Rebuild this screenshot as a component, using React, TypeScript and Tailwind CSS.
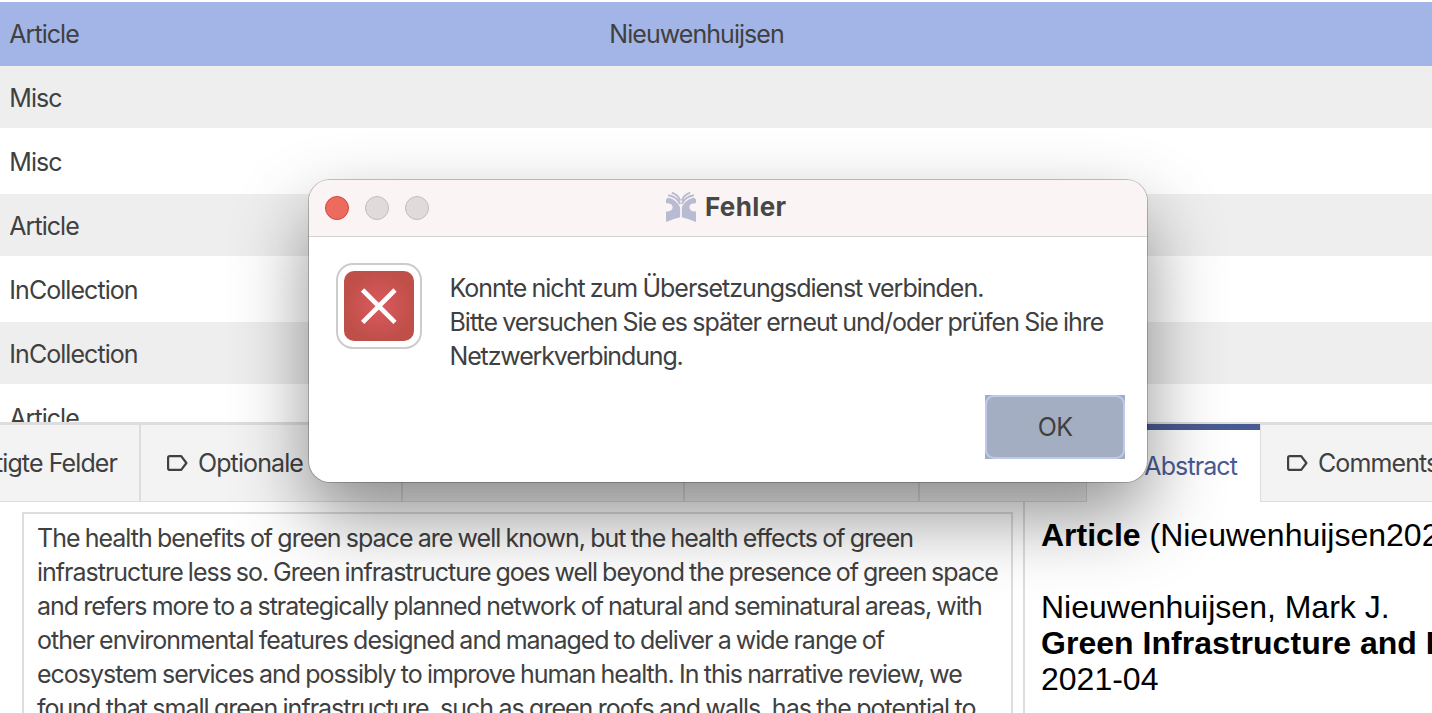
import React from "react";

const entries = [
  { type: "Article", author: "Nieuwenhuijsen", row: "h-16 bg-[#a3b5e6]", leading: "leading-[64px]" },
  { type: "Misc", author: "", row: "h-[62px] bg-[#eeeeee]", leading: "leading-[64px]" },
  { type: "Misc", author: "", row: "h-[66px] bg-white", leading: "leading-[68px]" },
  { type: "Article", author: "", row: "h-[62px] bg-[#eeeeee]", leading: "leading-[64px]" },
  { type: "InCollection", author: "", row: "h-[66px] bg-white", leading: "leading-[68px]" },
  { type: "InCollection", author: "", row: "h-[62px] bg-[#eeeeee]", leading: "leading-[64px]" },
  { type: "Article", author: "", row: "h-[66px] bg-white", leading: "leading-[68px]" },
];

const abstractLines = [
  { text: "The health benefits of green space are well known, but the health effects of green", spacing: "[word-spacing:-0.8px]" },
  { text: "infrastructure less so. Green infrastructure goes well beyond the presence of green space", spacing: "[word-spacing:-1.1px]" },
  { text: "and refers more to a strategically planned network of natural and seminatural areas, with", spacing: "[word-spacing:-0.9px]" },
  { text: "other environmental features designed and managed to deliver a wide range of", spacing: "[word-spacing:-0.85px]" },
  { text: "ecosystem services and possibly to improve human health. In this narrative review, we", spacing: "[word-spacing:-0.8px]" },
  { text: "found that small green infrastructure, such as green roofs and walls, has the potential to", spacing: "[word-spacing:-0.65px]" },
];

const messageLines = [
  { text: "Konnte nicht zum Übersetzungsdienst verbinden.", spacing: "tracking-[-1px] [word-spacing:-0.85px]" },
  { text: "Bitte versuchen Sie es später erneut und/oder prüfen Sie ihre", spacing: "tracking-[-1px] [word-spacing:-0.8px]" },
  { text: "Netzwerkverbindung.", spacing: "tracking-[-1.15px]" },
];

function LabelIcon() {
  return (
    <svg width="21" height="16" viewBox="0 0 21 16" fill="none" className="shrink-0">
      <path d="M2.8 1.1H14.2L19.4 8L14.2 14.9H2.8Q1.1 14.9 1.1 13.2V2.8Q1.1 1.1 2.8 1.1Z" stroke="#404040" strokeWidth="2.2" strokeLinejoin="round" />
    </svg>
  );
}

function BookLogo() {
  const half = (
    <g>
      <path d="M0 8.4L1.8 6.8C7 7.4 11.5 10.8 14.1 16.4V26.2C9.5 27.4 4.5 29 0 31V20.6C4.2 20.6 6.6 18.8 6.6 16.2C6.6 13.4 4.2 12 0 12.2Z" fill="#b9bbd2" />
      <path d="M2.2 4.3C7.4 5 12 8.4 14.2 13M5.8 1.6C9.8 3 13 6 14.2 9.6" stroke="#b9bbd2" strokeWidth="1.9" fill="none" />
    </g>
  );
  return (
    <svg width="30" height="32" viewBox="0 0 30 32" className="shrink-0">
      {half}
      <g transform="translate(30 0) scale(-1 1)">{half}</g>
    </svg>
  );
}

function EntryTable() {
  return (
    <div className="h-[422px] shrink-0 overflow-hidden pt-0.5 tracking-[-0.95px]">
      {entries.map((e, i) => (
        <div key={i} className={`grid grid-cols-[600px_1fr] items-start pl-[9.3px] ${e.row} ${e.leading}`}>
          <span>{e.type}</span>
          <span>{e.author}</span>
        </div>
      ))}
    </div>
  );
}

function EditorTabs() {
  return (
    <div className="flex h-[80px] shrink-0 border-t-[3px] border-[#dddddd] tracking-[-0.9px]">
      <div className="flex w-[141px] justify-end border-r-2 border-b border-[#dddddd] bg-[#f3f3f3] pr-[22px] leading-[77px] whitespace-nowrap">
        Benötigte Felder
      </div>
      <div className="flex w-[262px] items-center gap-[10px] border-r-2 border-b border-[#dddddd] bg-[#f3f3f3] pl-[26px] whitespace-nowrap">
        <LabelIcon />
        <span className="pt-0.5">Optionale</span>
      </div>
      <div className="w-[282px] border-r-2 border-b border-[#dddddd] bg-[#f3f3f3]" />
      <div className="w-[235px] border-r-2 border-b border-[#dddddd] bg-[#f3f3f3]" />
      <div className="w-[167px] border-r border-b border-[#dddddd] bg-[#f3f3f3]" />
      <div className="-mt-px flex w-[173px] items-center justify-end border-t-[6px] border-[#4a5b92] bg-white pt-0.5 pr-[23px] text-[#4a5b92]">
        Abstract
      </div>
      <div className="flex w-[172px] items-center gap-[10px] border-b border-l border-[#dddddd] bg-[#f3f3f3] pl-[26px]">
        <LabelIcon />
        <span className="pt-0.5">Comments</span>
      </div>
    </div>
  );
}

function ErrorDialog() {
  return (
    <div
      role="dialog"
      className="absolute top-[180px] left-[309px] flex h-[302px] w-[838px] flex-col overflow-hidden rounded-[21px] bg-white shadow-[0_0_0_1px_rgba(0,0,0,0.22),0_34px_76px_rgba(0,0,0,0.43)]"
    >
      <div className="grid h-[57px] shrink-0 grid-cols-[356px_1fr] items-center border-b border-[#d5d1d1] bg-[#fbf4f4]">
        <div className="flex gap-4 pl-4">
          <span className="size-6 rounded-full border border-[#d1493f] bg-[#ed6a5f]" />
          <span className="size-6 rounded-full border border-[#c4bebe] bg-[#e0dada]" />
          <span className="size-6 rounded-full border border-[#c4bebe] bg-[#e0dada]" />
        </div>
        <div className="flex items-center gap-[9px] pb-0.5 pl-px">
          <BookLogo />
          <span className="text-[26px] leading-[54px] font-bold tracking-[0.35px] text-[#494746]">Fehler</span>
        </div>
      </div>
      <div className="flex flex-1 pt-[26px] pl-[27px]">
        <div className="flex size-[86px] items-center justify-center rounded-[17px] border-2 border-[#cccccc]">
          <div className="flex size-[70px] items-center justify-center rounded-[10px] bg-[radial-gradient(circle,#dc5a5e_0%,#bf4f49_70%)]">
            <svg width="36" height="36" viewBox="0 0 36 36">
              <path d="M1.6 2L34 34.4M34 2L1.6 34.4" stroke="white" strokeWidth="4.6" />
            </svg>
          </div>
        </div>
        <div className="pt-2 pl-[27.5px] leading-[34px] whitespace-nowrap">
          {messageLines.map((l) => (
            <div key={l.text} className={l.spacing}>{l.text}</div>
          ))}
        </div>
      </div>
      <div className="flex justify-end pr-[22px] pb-[23px]">
        <button className="h-16 w-[140px] bg-[#a4aec3] tracking-[-0.6px]">
          <span className="flex h-full items-center justify-center rounded-[9px] border-2 border-[#bdcbea] pt-0.5">OK</span>
        </button>
      </div>
    </div>
  );
}

export default function App() {
  return (
    <main className="relative flex h-[713px] w-[1432px] flex-col overflow-hidden bg-white font-['Inter',sans-serif] text-[25px] text-[#404040]">
      <EntryTable />
      <EditorTabs />
      <div className="flex min-h-0 flex-1">
        <div className="w-[1025px] shrink-0 border-r-2 border-[#dddddd] pt-[10px] pl-[22px]">
          <div className="h-[230px] w-[991px] border-2 border-[#dddddd] pt-[7px] pl-[13px] leading-[34px] tracking-[-1px] whitespace-nowrap">
            {abstractLines.map((l) => (
              <div key={l.text} className={l.spacing}>{l.text}</div>
            ))}
          </div>
        </div>
        <div className="pt-[15px] pl-4 font-['Liberation_Sans',sans-serif] text-[32px] leading-9 whitespace-nowrap text-black">
          <div><b>Article</b> (Nieuwenhuijsen2021)</div>
          <div className="pt-9">Nieuwenhuijsen, Mark J.</div>
          <div className="font-bold tracking-[0.03px]">Green Infrastructure and Health</div>
          <div>2021-04</div>
        </div>
      </div>
      <ErrorDialog />
    </main>
  );
}
